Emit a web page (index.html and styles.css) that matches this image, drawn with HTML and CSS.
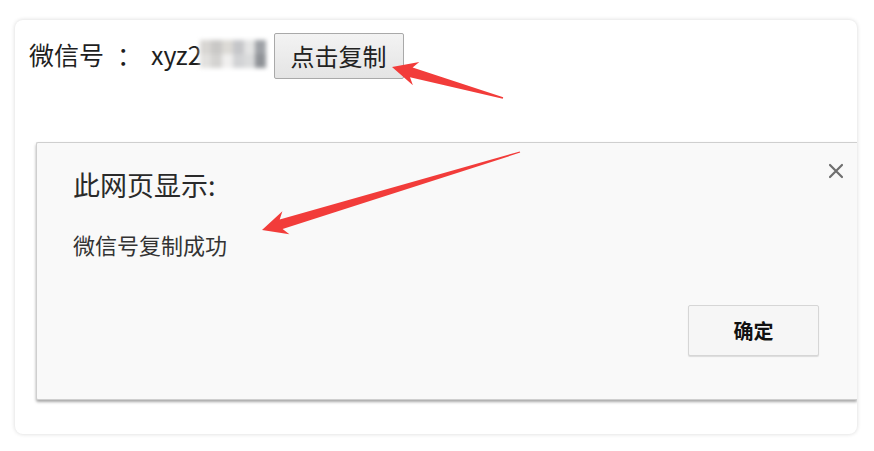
FILE: index.html
```html
<!DOCTYPE html>
<html lang="zh-CN">
<head>
<meta charset="utf-8">
<title>复制微信号</title>
<link rel="stylesheet" href="styles.css">
</head>
<body>
<div class="card">
  <div class="row">
    <span class="label">微信号<span class="colon">：</span>xyz2<span class="mosaic"><i></i><i></i><i></i><i></i><i></i><i></i><i></i><i></i><i></i><i></i><i></i><i></i></span></span>
    <button class="copy-btn">点击复制</button>
  </div>
  <div class="dialog">
    <svg class="close" width="16" height="16" viewBox="0 0 16 16"><path d="M2 2 L14 14 M14 2 L2 14" stroke="#6f6f6f" stroke-width="2.2" stroke-linecap="round"/></svg>
    <div class="title">此网页显示:</div>
    <div class="message">微信号复制成功</div>
    <div class="actions"><button class="ok-btn">确定</button></div>
  </div>
</div>
<svg class="arrows" width="874" height="451" viewBox="0 0 874 451">
  <polygon fill="#f23c3a" points="392,67 419.3,62.1 412.6,67.6 503.2,97.3 502.8,98.7 410,77.2 412.9,85.3"/>
  <polygon fill="#f23c3a" points="262,230 282.4,211.3 279.7,219.4 519.8,151.4 520.2,152.6 282.6,229 289.4,234.3"/>
</svg>
</body>
</html>
```

FILE: styles.css
```css
html, body {
  margin: 0;
  padding: 0;
  background: #ffffff;
}
body {
  width: 874px;
  height: 451px;
  position: relative;
  overflow: hidden;
  padding: 20px 0 0 15px;
  box-sizing: border-box;
  font-family: "Noto Sans CJK SC", "Liberation Sans", sans-serif;
  color: #222;
}
.card {
  width: 842px;
  height: 414px;
  box-sizing: border-box;
  background: #fff;
  border-radius: 8px;
  box-shadow: 0 0 4px rgba(0, 0, 0, 0.16);
  padding: 13px 0 0 21px;
  overflow: hidden;
}
.row {
  display: flex;
  align-items: center;
  height: 46px;
}
.label {
  display: inline-flex;
  align-items: center;
  font-family: "Noto Sans CJK SC", sans-serif;
  font-size: 25px;
  line-height: 46px;
  color: #1e1e1e;
  margin-left: -7px;
  margin-bottom: 4px;
}
.colon {
  padding-left: 13px;
  margin-right: 9px;
}
.mosaic {
  display: inline-grid;
  grid-template-columns: repeat(6, 11px);
  grid-template-rows: repeat(2, 14px);
  filter: blur(2px);
  margin-left: -2px;
  margin-right: 8px;
}
.mosaic i:nth-child(1) { background: #d8d6d3; }
.mosaic i:nth-child(2) { background: #c9c8c6; }
.mosaic i:nth-child(3) { background: #dcdad6; }
.mosaic i:nth-child(4) { background: #c5c6c9; }
.mosaic i:nth-child(5) { background: #e4e4e4; }
.mosaic i:nth-child(6) { background: #9ea1a6; }
.mosaic i:nth-child(7) { background: #e2e1df; }
.mosaic i:nth-child(8) { background: #d4d3d1; }
.mosaic i:nth-child(9) { background: #f0efee; }
.mosaic i:nth-child(10) { background: #d2d3d5; }
.mosaic i:nth-child(11) { background: #dadbdc; }
.mosaic i:nth-child(12) { background: #8f9297; }
.copy-btn {
  width: 130px;
  height: 46px;
  box-sizing: border-box;
  border: 1px solid #a9a9a9;
  border-radius: 2px;
  background: linear-gradient(#f3f3f3, #e4e4e4);
  font-family: "Noto Sans CJK SC", sans-serif;
  font-size: 24px;
  color: #222;
  padding: 0;
  line-height: 44px;
}
.dialog {
  position: relative;
  margin-top: 63px;
  height: 258px;
  box-sizing: border-box;
  background: #f9f9f9;
  border: 1px solid #cfcfcf;
  border-right: none;
  border-radius: 2px 0 0 2px;
  box-shadow: 0 2px 3px rgba(0, 0, 0, 0.35);
  padding: 26px 38px 43px 36px;
  display: flex;
  flex-direction: column;
}
.close {
  position: absolute;
  top: 20px;
  right: 13px;
}
.title {
  font-size: 27px;
  line-height: 32px;
  color: #2a2a2a;
}
.message {
  margin-top: 30px;
  font-size: 22px;
  line-height: 26px;
  color: #333;
}
.actions {
  margin-top: auto;
  display: flex;
  justify-content: flex-end;
}
.ok-btn {
  width: 131px;
  height: 51px;
  box-sizing: border-box;
  border: 1px solid #d6d6d6;
  border-radius: 2px;
  background: #f6f6f6;
  box-shadow: 0 1px 1px rgba(0, 0, 0, 0.12);
  font-family: "Noto Sans CJK SC", sans-serif;
  font-size: 20px;
  font-weight: bold;
  color: #111;
  padding: 0;
}
.arrows {
  position: absolute;
  left: 0;
  top: 0;
  pointer-events: none;
}
```
